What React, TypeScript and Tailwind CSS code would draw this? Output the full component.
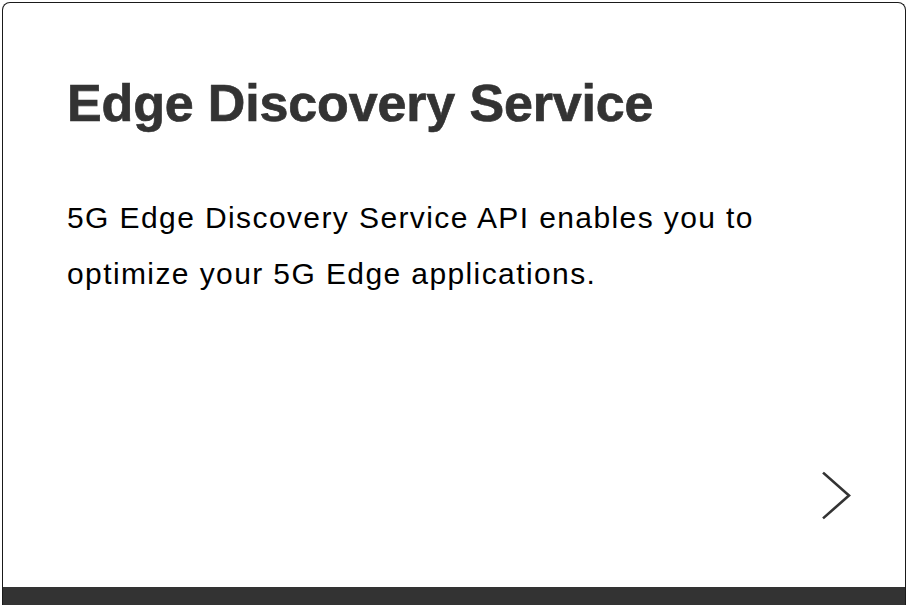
import React from 'react';

const ChevronRight: React.FC = () => (
  <svg width="30" height="50" viewBox="0 0 30 50" fill="none" stroke="#333333" strokeWidth="2.6" strokeLinecap="square">
    <path d="M3 3.5L28 25.5L3 47.5" />
  </svg>
);

const App: React.FC = () => {
  return (
    <div className="w-[908px] h-[608px] bg-white p-[2px]" style={{ fontFamily: '"Liberation Sans", Arial, Helvetica, sans-serif' }}>
      <div className="w-[904px] h-[603px] flex flex-col rounded-t-[8px] border border-b-0 border-[#1a1a1a] overflow-hidden bg-white">
        <div className="flex-1 pl-[64px] pt-[74px]">
          <h1 className="text-[52px] leading-[52px] font-bold text-[#333333] tracking-[-0.15px] [-webkit-text-stroke:0.7px_#333333]">
            Edge Discovery Service
          </h1>
          <p className="mt-[61px] text-[30px] leading-[56px] tracking-[1.4px] text-black">
            5G Edge Discovery Service API enables you to
            <br />
            optimize your 5G Edge applications.
          </p>
        </div>
        <div className="flex justify-end pr-[54px] mb-[67px]">
          <ChevronRight />
        </div>
        <div className="h-[18px] -mx-px bg-[#333333]" />
      </div>
    </div>
  );
};

export default App;
